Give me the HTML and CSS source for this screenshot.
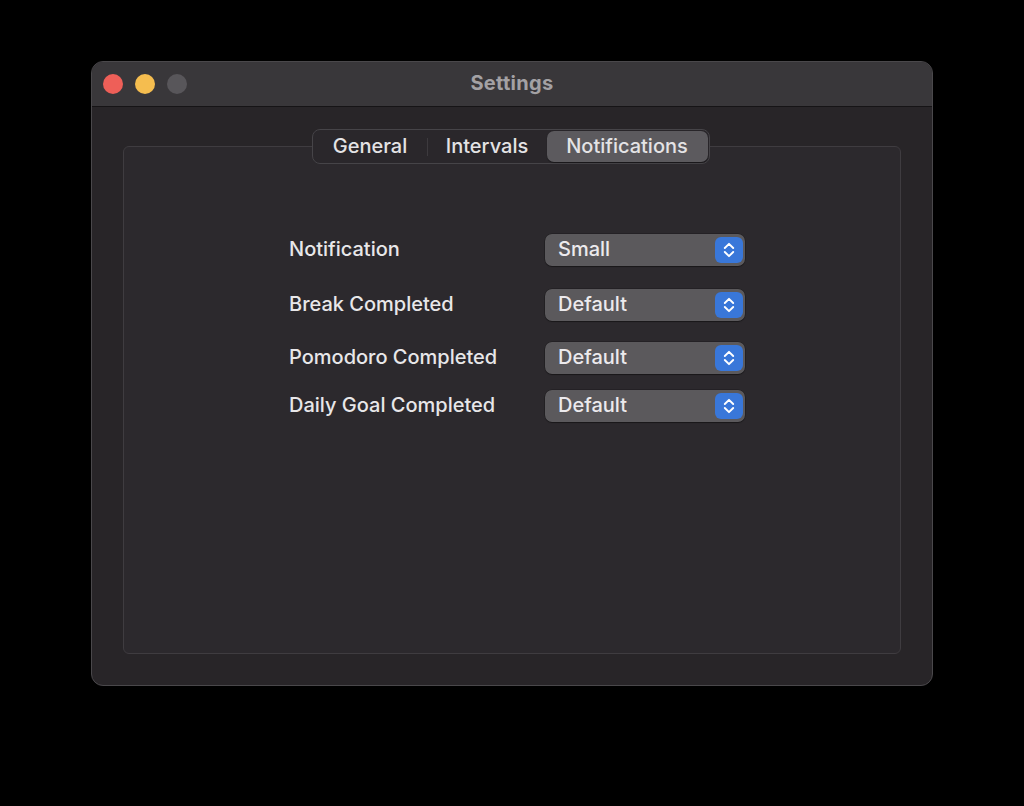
FILE: index.html
```html
<!DOCTYPE html>
<html>
<head>
<meta charset="utf-8">
<link rel="stylesheet" href="styles.css">
</head>
<body>
<div class="window">
  <div class="titlebar">
    <div class="lights">
      <span class="light red"></span>
      <span class="light yellow"></span>
      <span class="light gray"></span>
    </div>
    <div class="title">Settings</div>
  </div>
  <div class="content">
    <div class="segmented">
      <div class="seg seg-general">General</div>
      <div class="seg-sep"></div>
      <div class="seg seg-intervals">Intervals</div>
      <div class="seg seg-notif selected">Notifications</div>
    </div>
    <div class="panel">
      <div class="form">
        <div class="row r1">
          <div class="label">Notification</div>
          <div class="popup"><span class="value">Small</span><span class="stepper"><svg width="14" height="20" viewBox="0 0 14 20"><path d="M2.8 8 L7 3.8 L11.2 8 M2.8 12 L7 16.2 L11.2 12" fill="none" stroke="#fff" stroke-width="1.9" stroke-linecap="round" stroke-linejoin="round"/></svg></span></div>
        </div>
        <div class="row r2">
          <div class="label">Break Completed</div>
          <div class="popup"><span class="value">Default</span><span class="stepper"><svg width="14" height="20" viewBox="0 0 14 20"><path d="M2.8 8 L7 3.8 L11.2 8 M2.8 12 L7 16.2 L11.2 12" fill="none" stroke="#fff" stroke-width="1.9" stroke-linecap="round" stroke-linejoin="round"/></svg></span></div>
        </div>
        <div class="row r3">
          <div class="label">Pomodoro Completed</div>
          <div class="popup"><span class="value">Default</span><span class="stepper"><svg width="14" height="20" viewBox="0 0 14 20"><path d="M2.8 8 L7 3.8 L11.2 8 M2.8 12 L7 16.2 L11.2 12" fill="none" stroke="#fff" stroke-width="1.9" stroke-linecap="round" stroke-linejoin="round"/></svg></span></div>
        </div>
        <div class="row r4">
          <div class="label">Daily Goal Completed</div>
          <div class="popup"><span class="value">Default</span><span class="stepper"><svg width="14" height="20" viewBox="0 0 14 20"><path d="M2.8 8 L7 3.8 L11.2 8 M2.8 12 L7 16.2 L11.2 12" fill="none" stroke="#fff" stroke-width="1.9" stroke-linecap="round" stroke-linejoin="round"/></svg></span></div>
        </div>
      </div>
    </div>
  </div>
</div>
</body>
</html>
```
FILE: styles.css
```css
* { box-sizing: border-box; }
html, body { margin: 0; padding: 0; }
body {
  background: #000;
  width: 1024px;
  height: 806px;
  padding: 61px 0 0 91px;
  font-family: Inter, "Noto Sans", "Liberation Sans", sans-serif;
  overflow: hidden;
}
.window {
  width: 842px;
  height: 625px;
  border-radius: 12px;
  background: #282528;
  border: 1px solid #4a484b;
  overflow: hidden;
  display: flex;
  flex-direction: column;
}
.titlebar {
  height: 45px;
  flex: none;
  background: #39373a;
  border-bottom: 1px solid #161416;
  position: relative;
  display: flex;
  align-items: center;
  justify-content: center;
  padding-bottom: 2px;
}
.lights {
  position: absolute;
  left: 11px;
  top: 12px;
  display: flex;
  gap: 12px;
}
.light {
  width: 20px;
  height: 20px;
  border-radius: 50%;
  display: block;
}
.red { background: #ee5f58; }
.yellow { background: #f5bd4f; }
.gray { background: #58565a; }
.title {
  color: #a3a1a4;
  font-size: 20px;
  font-weight: 700;
  letter-spacing: 0.3px;
}
.content {
  flex: 1;
  padding: 22px 31px 31px 31px;
  display: flex;
  flex-direction: column;
  align-items: center;
}
.segmented {
  position: relative;
  z-index: 1;
  width: 398px;
  height: 35px;
  flex: none;
  background: #2a272b;
  border: 1px solid #464448;
  border-radius: 8px;
  display: flex;
  align-items: center;
  padding: 1px;
  margin-left: -3px;
}
.seg {
  height: 100%;
  display: flex;
  align-items: center;
  justify-content: center;
  color: #e4e3e5;
  font-size: 20px;
  font-weight: 500;
  border-radius: 7px;
  padding-bottom: 2px;
}
.seg-general { width: 113px; }
.seg-sep { width: 1px; height: 18px; background: #3d3a3e; }
.seg-intervals { width: 119px; }
.seg-notif { flex: 1; }
.selected {
  background: #5c5a5e;
  box-shadow: 0 0.5px 1px rgba(0,0,0,0.4);
}
.panel {
  align-self: stretch;
  flex: 1;
  margin-top: -18px;
  background: #2c292d;
  border: 1px solid #3f3c40;
  border-radius: 6px;
  padding: 87px 0 0 165px;
}
.form {
  display: flex;
  flex-direction: column;
}
.row {
  display: flex;
  align-items: center;
  height: 32px;
}
.r2 { margin-top: 23px; }
.r3 { margin-top: 21px; }
.r4 { margin-top: 16px; }
.label {
  width: 256px;
  color: #e8e7e9;
  font-size: 20px;
  font-weight: 500;
  padding-bottom: 2px;
}
.popup {
  width: 200px;
  height: 32px;
  border-radius: 7px;
  background: #5b595c;
  box-shadow: 0 0 0 0.5px rgba(0,0,0,0.35), 0 1px 1px rgba(0,0,0,0.3);
  display: flex;
  align-items: center;
  justify-content: space-between;
  padding: 0 2px 0 13px;
}
.value {
  color: #eceaed;
  font-size: 20px;
  font-weight: 500;
  padding-bottom: 2px;
}
.stepper {
  width: 28px;
  height: 26px;
  border-radius: 6px;
  background: #3977d9;
  display: flex;
  align-items: center;
  justify-content: center;
}
```
